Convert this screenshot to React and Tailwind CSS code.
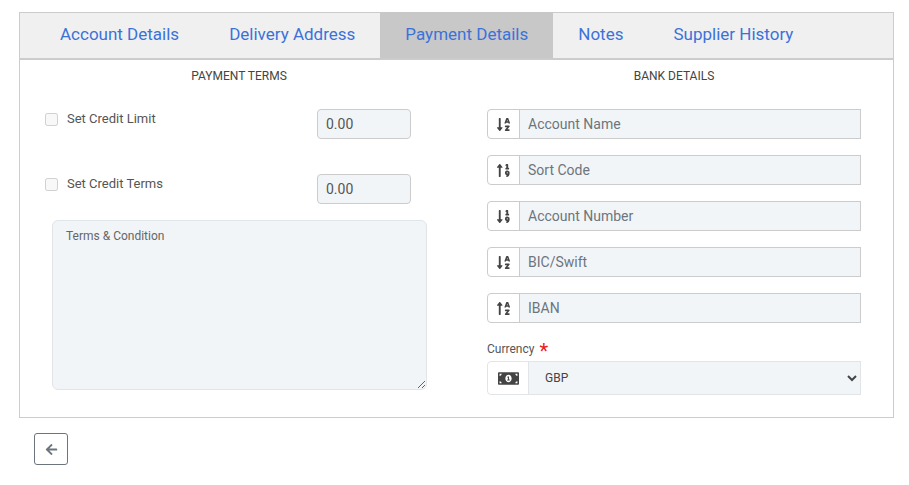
import React from "react";
import { FaSortAlphaDown, FaSortAlphaUp, FaSortNumericDown, FaSortNumericUp, FaMoneyBillAlt, FaArrowLeft } from "react-icons/fa";

const tabs = ["Account Details", "Delivery Address", "Payment Details", "Notes", "Supplier History"];
const bank = [
  ["Account Name", FaSortAlphaDown],
  ["Sort Code", FaSortNumericUp],
  ["Account Number", FaSortNumericDown],
  ["BIC/Swift", FaSortAlphaDown],
  ["IBAN", FaSortAlphaUp],
];

function CreditRow({ label, mb }) {
  return (
    <div className={`flex items-start justify-between pl-[25px] pr-[47px] ${mb}`}>
      <label className="flex items-center gap-[9px] text-[13px] leading-[18px] text-[#555] mt-px">
        <input type="checkbox" disabled className="w-[13px] h-[13px] m-0" />
        <span>{label}</span>
      </label>
      <input
        readOnly
        value="0.00"
        className="w-[94px] h-[30px] px-2 text-sm text-[#555] bg-[#f2f5f8] border border-[#ccc] rounded outline-none"
      />
    </div>
  );
}

export default function App() {
  return (
    <div className="w-[909px] h-[485px] bg-white pt-3 pl-[19px] font-['Roboto',sans-serif]">
      <div className="w-[875px] h-[406px] border border-[#ccc]">
        <div className="flex h-[47px] pl-[15px] bg-[#f0f0f0] border-b-2 border-[#ccc]">
          {tabs.map((t) => (
            <div
              key={t}
              className={`flex items-center px-[25px] h-[46px] -mt-px text-[17px] text-[#3b72d9] ${t === "Payment Details" ? "bg-[#c8c8c8]" : ""}`}
            >
              {t}
            </div>
          ))}
        </div>
        <div className="grid grid-cols-[438px_432px]">
          <div>
            <h3 className="h-[32px] pt-[7px] text-center text-xs leading-[18px] text-[#444] font-normal mb-[17px]">PAYMENT TERMS</h3>
            <CreditRow label="Set Credit Limit" mb="mb-[35px]" />
            <CreditRow label="Set Credit Terms" mb="mb-4" />
            <textarea
              placeholder="Terms & Condition"
              className="block ml-[32px] w-[375px] h-[170px] px-[13px] py-[7px] text-xs leading-[16px] text-[#555] placeholder:text-[#666] bg-[#f2f5f8] border border-[#e2e5e8] rounded-md outline-none"
            />
          </div>
          <div className="px-[29px]">
            <h3 className="h-[32px] pt-[7px] text-center text-xs leading-[18px] text-[#444] font-normal mb-[17px]">BANK DETAILS</h3>
            <div className="flex flex-col gap-4">
              {bank.map(([name, Icon]) => (
                <div key={name} className="flex h-[30px] w-[374px]">
                  <div className="flex items-center justify-center w-[33px] bg-white border border-[#ccc] rounded-l text-[#444] text-[15px]">
                    <Icon />
                  </div>
                  <input
                    placeholder={name}
                    className="flex-1 min-w-0 -ml-px px-2 text-sm text-[#555] placeholder:text-[#6c757d] bg-[#f2f5f8] border border-[#ccc] outline-none"
                  />
                </div>
              ))}
            </div>
            <div className="mt-[17px] h-[21px] text-xs leading-[18px] text-[#555]">
              Currency <span className="text-[#f01818] text-xl leading-[14px] align-[-5px] ml-[2px]">*</span>
            </div>
            <div className="flex h-[34px] w-[374px]">
              <div className="flex items-center justify-center w-[42px] bg-white border border-[#e2e5e8] rounded-l text-[#444] text-[21px]">
                <FaMoneyBillAlt />
              </div>
              <select className="flex-1 min-w-0 -ml-px pl-[12px] pr-1 text-xs text-[#444] bg-[#f2f5f8] border border-[#e2e5e8] outline-none">
                <option>GBP</option>
              </select>
            </div>
          </div>
        </div>
      </div>
      <button className="flex items-center justify-center mt-[15px] ml-[15px] w-[34px] h-[32px] border border-[#6c757d] rounded-[3px] text-[#6c757d] text-[13px]">
        <FaArrowLeft />
      </button>
    </div>
  );
}
